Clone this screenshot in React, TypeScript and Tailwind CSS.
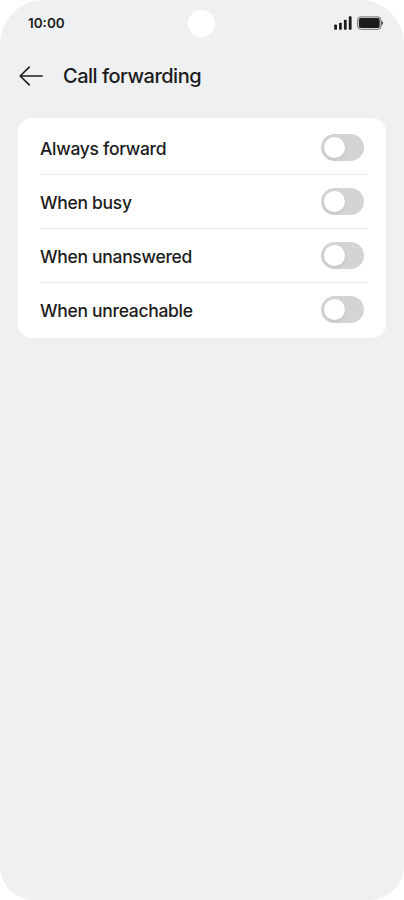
import React, { useState } from "react";

const options = [
  { id: "always", label: "Always forward" },
  { id: "busy", label: "When busy" },
  { id: "unanswered", label: "When unanswered" },
  { id: "unreachable", label: "When unreachable" },
];

const StatusBar: React.FC = () => (
  <div className="relative flex h-[46px] items-center justify-between pl-7 pr-[21px]">
    <span className="pt-0.5 text-[13.5px] font-semibold leading-none">10:00</span>

    {/* Camera cutout */}
    <div className="absolute left-[188px] top-[10px] h-[27px] w-[27px] rounded-full bg-white" />

    <div className="flex items-center gap-[5px]">
      {/* Signal */}
      <svg className="h-[14px] w-[18px]" viewBox="0 0 18 14" fill="currentColor">
        <rect x="0.2" y="8.6" width="2.8" height="5.2" rx="0.8" />
        <rect x="5" y="6.8" width="2.8" height="7" rx="0.8" />
        <rect x="9.9" y="3.8" width="2.8" height="10" rx="0.8" />
        <rect x="14.8" y="0.2" width="2.8" height="13.6" rx="0.8" />
      </svg>
      {/* Battery */}
      <svg className="h-[14px] w-[26px]" viewBox="0 0 26 14" fill="none">
        <rect x="0.6" y="0.9" width="23.4" height="12.4" rx="3" stroke="#6f6f70" strokeWidth="1" />
        <rect x="1.9" y="2.1" width="20.8" height="10" rx="1.8" fill="#1c1c1c" />
        <path d="M24.5 4.9C25.4 5.2 25.8 6.2 25.8 7.1C25.8 8 25.4 9 24.5 9.3Z" fill="#1c1c1c" />
      </svg>
    </div>
  </div>
);

const Toggle: React.FC<{ label: string; checked: boolean; onChange: () => void }> = ({
  label,
  checked,
  onChange,
}) => (
  <button
    role="switch"
    aria-checked={checked}
    aria-label={label}
    onClick={onChange}
    className={`flex h-[27px] w-[43px] items-center rounded-full px-[3px] transition-colors ${
      checked ? "justify-end bg-blue-500" : "justify-start bg-[#d4d4d4]"
    }`}
  >
    <span className="h-[21px] w-[21px] rounded-full bg-white shadow-[0_2px_4px_rgba(0,0,0,0.08)]" />
  </button>
);

const App: React.FC = () => {
  const [enabled, setEnabled] = useState<string[]>([]);

  const handleToggle = (id: string) => {
    setEnabled((prev) =>
      prev.includes(id) ? prev.filter((item) => item !== id) : [...prev, id]
    );
  };

  return (
    <div className="min-h-screen bg-white font-['Inter',sans-serif] text-[#1c1c1c]">
      <div className="h-[900px] w-[404px] rounded-t-[44px] rounded-b-[34px] bg-[#eff0f2]">
        <StatusBar />

        {/* Header */}
        <header className="flex h-[60px] items-center pl-[19px]">
          <button aria-label="Back">
            <svg
              className="h-6 w-6"
              viewBox="0 0 24 24"
              fill="none"
              stroke="currentColor"
              strokeWidth="1.6"
              strokeLinecap="round"
              strokeLinejoin="round"
            >
              <path d="M23.2 12H1.6M10.2 3.1L1.2 12L10.2 20.9" />
            </svg>
          </button>
          <h1 className="ml-5 whitespace-nowrap text-[20px] font-[450] leading-none tracking-[-0.5px]">
            Call forwarding
          </h1>
        </header>

        {/* Forwarding options */}
        <main className="mx-[18px] mt-3 rounded-[14px] bg-white pb-px pl-[22px] pr-[18px] pt-[3px]">
          {options.map((option, index) => (
            <div
              key={option.id}
              className={`flex h-[54px] items-center justify-between border-b pr-1 ${
                index < options.length - 1 ? "border-[#ebebeb]" : "border-transparent"
              }`}
            >
              <span className="whitespace-nowrap pt-0.5 text-[17.5px] font-[450] leading-none tracking-[-0.3px]">
                {option.label}
              </span>
              <Toggle
                label={option.label}
                checked={enabled.includes(option.id)}
                onChange={() => handleToggle(option.id)}
              />
            </div>
          ))}
        </main>
      </div>
    </div>
  );
};

export default App;
